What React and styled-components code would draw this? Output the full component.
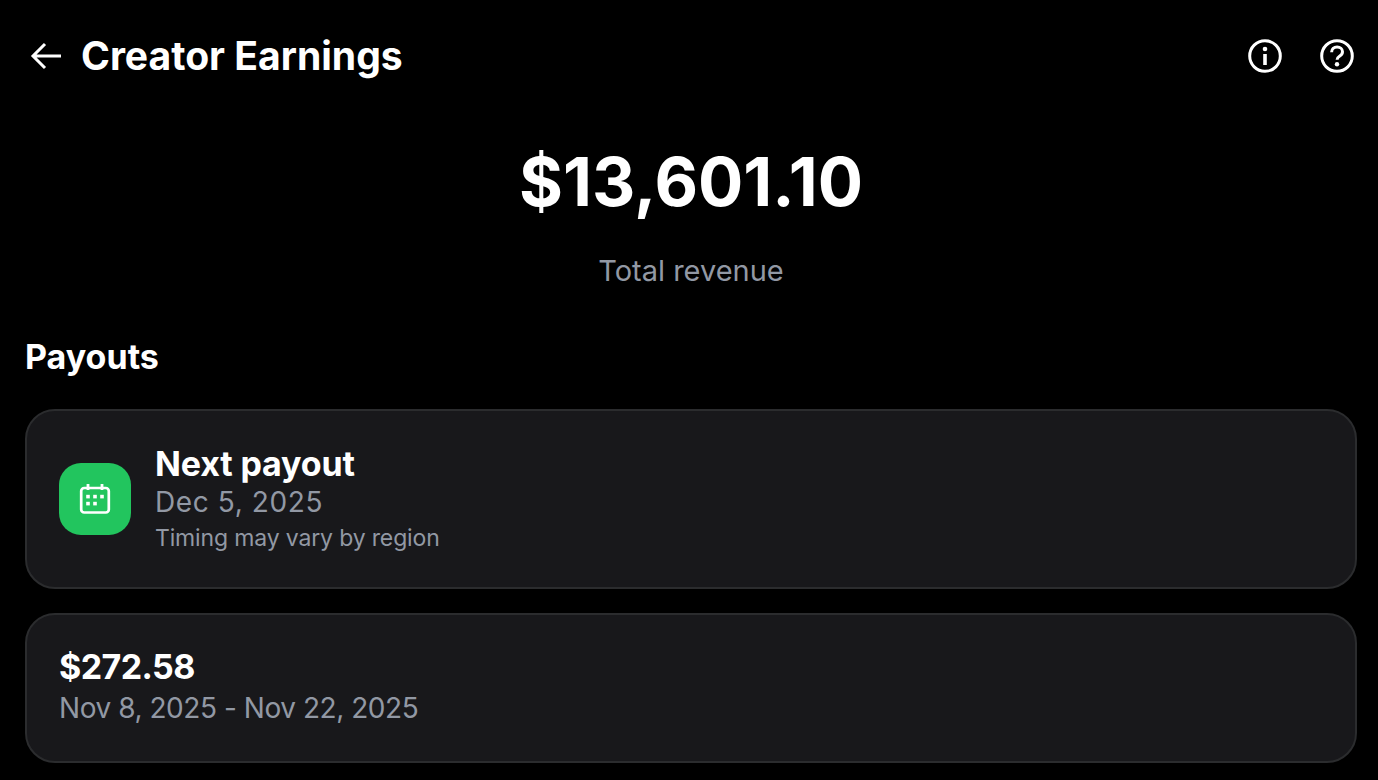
import React from "react";
import styled, { createGlobalStyle } from "styled-components";

const Global = createGlobalStyle`
  html, body { margin: 0; padding: 0; background: #000; height: 100%; overflow: hidden; }
  body { font-family: Inter, "Liberation Sans", sans-serif; color: #fff; }
`;
const Page = styled.div`
  width: 1378px; height: 780px; box-sizing: border-box; padding: 0 21px 0 25px; overflow: hidden; background: #000;
  display: flex; flex-direction: column;
`;
const Header = styled.header`
  height: 112px; display: flex; align-items: center; justify-content: space-between; margin-left: 5px; flex: none;
`;
const TitleGroup = styled.div`display: flex; align-items: center; gap: 15px;`;
const Title = styled.h1`
  margin: 0; font-size: 39.1px; line-height: 44px; font-weight: 700;
`;
const Actions = styled.div`display: flex; align-items: center; gap: 36px; margin-right: 2px;`;
const IconBtn = styled.svg`width: 36px; height: 36px; display: block; color: #fff;`;
const Summary = styled.section`display: flex; flex-direction: column; align-items: center; flex: none;`;
const Amount = styled.div`
  margin-top: 35px; font-size: 67.2px; line-height: 70px; font-weight: 700;
`;
const Muted = styled.div`
  margin-top: 36px; font-size: 29px; line-height: 36px; font-weight: 400; color: #9298a4;
`;
const SectionTitle = styled.h2`
  margin: 50px 0 34px; font-size: 34px; line-height: 36px; font-weight: 700; flex: none;
`;
const Card = styled.div`
  box-sizing: border-box; height: ${p => p.$h}px; margin-bottom: 24px; padding: 0 32px; flex: none;
  display: flex; align-items: center; gap: 24px;
  background: #18181b; border: 2px solid #2b2c2e; border-radius: 30px;
`;
const IconTile = styled.div`
  width: 72px; height: 72px; border-radius: 22px; background: #22c55e; flex: none;
  display: flex; align-items: center; justify-content: center; color: #fff;
`;
const Stack = styled.div`
  display: flex; flex-direction: column; gap: ${p => p.$gap}px; padding-bottom: ${p => p.$lift}px;
`;
const CardTitle = styled.div`
  font-size: 34px; line-height: 39px; font-weight: 700; letter-spacing: ${p => p.$track}px;
`;
const CardDate = styled.div`
  font-size: 28px; line-height: 38px; font-weight: 400; color: #9298a4; letter-spacing: ${p => p.$track}px;
`;
const CardNote = styled.div`font-size: 23px; line-height: 34px; font-weight: 400; color: #9298a4; letter-spacing: -0.15px;`;

const Back = () => (
  <IconBtn viewBox="0 0 36 36" fill="none" stroke="currentColor" strokeWidth="3">
    <path d="M31 18H4M15 6 3 18l12 12" />
  </IconBtn>
);
const Info = () => (
  <IconBtn viewBox="0 0 36 36" fill="none" stroke="currentColor">
    <circle cx="18" cy="18" r="15.3" strokeWidth="3" />
    <circle cx="18" cy="11" r="2.3" fill="currentColor" stroke="none" />
    <path d="M18 16v11" strokeWidth="3.6" />
  </IconBtn>
);
const Help = () => (
  <IconBtn viewBox="0 0 36 36" fill="none" stroke="currentColor">
    <circle cx="18" cy="18" r="15.3" strokeWidth="3" />
    <path d="M12.6 14.2c0-3.2 2.4-5.2 5.5-5.2s5.4 2 5.4 4.8c0 2.2-1.2 3.3-3 4.4-1.5.9-2.4 1.8-2.4 3.6" strokeWidth="3" />
    <circle cx="18" cy="26.2" r="2.2" fill="currentColor" stroke="none" />
  </IconBtn>
);
const Calendar = () => (
  <svg width="32" height="32" viewBox="0 0 32 32" fill="none" stroke="currentColor">
    <rect x="2.2" y="5" width="27.6" height="24.5" rx="3" strokeWidth="2.7" />
    <path d="M9 1v6M23 1v6" strokeWidth="2.8" />
    <g fill="currentColor" stroke="none">
      <rect x="7.2" y="11.8" width="3.6" height="3.6" />
      <rect x="14.2" y="11.8" width="3.6" height="3.6" />
      <rect x="21.2" y="11.8" width="3.6" height="3.6" />
      <rect x="7.2" y="18.8" width="3.6" height="3.6" />
      <rect x="14.2" y="18.8" width="3.6" height="3.6" />
    </g>
  </svg>
);

export default function App() {
  return (
    <Page>
      <Global />
      <Header>
        <TitleGroup>
          <Back />
          <Title>Creator Earnings</Title>
        </TitleGroup>
        <Actions>
          <Info />
          <Help />
        </Actions>
      </Header>
      <Summary>
        <Amount>$13,601.10</Amount>
        <Muted>Total revenue</Muted>
      </Summary>
      <SectionTitle>Payouts</SectionTitle>
      <Card $h={180}>
        <IconTile><Calendar /></IconTile>
        <Stack $gap={0} $lift={0}>
          <CardTitle $track={-0.15}>Next payout</CardTitle>
          <CardDate $track={0.6}>Dec 5, 2025</CardDate>
          <CardNote>Timing may vary by region</CardNote>
        </Stack>
      </Card>
      <Card $h={150}>
        <Stack $gap={3} $lift={2}>
          <CardTitle $track={-0.6}>$272.58</CardTitle>
          <CardDate $track={-0.45}>Nov 8, 2025 - Nov 22, 2025</CardDate>
        </Stack>
      </Card>
    </Page>
  );
}
